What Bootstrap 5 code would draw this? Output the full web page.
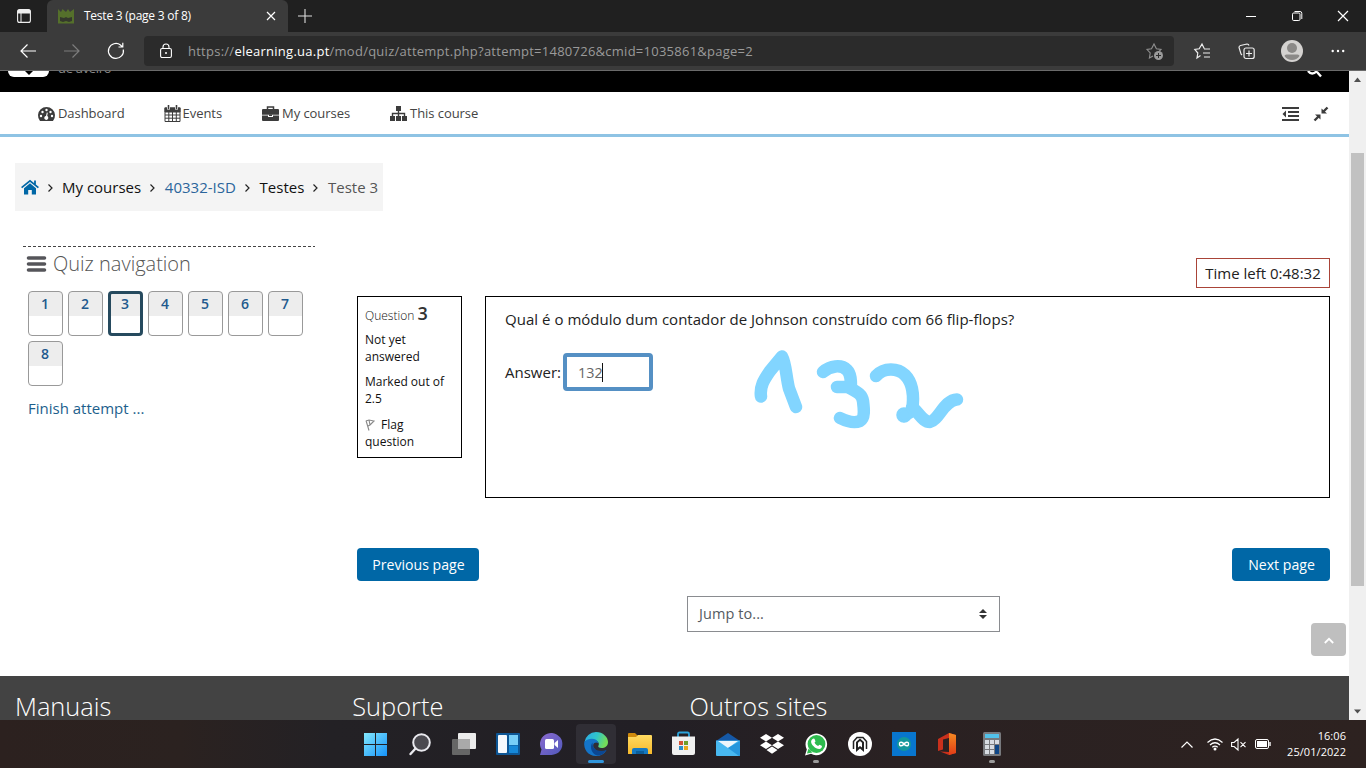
<!DOCTYPE html>
<html lang="en">
<head>
<meta charset="utf-8">
<title>Teste 3 (page 3 of 8)</title>
<link href="https://cdn.jsdelivr.net/npm/bootstrap@5.3.0/dist/css/bootstrap.min.css" rel="stylesheet">
<script src="https://cdn.jsdelivr.net/npm/bootstrap@5.3.0/dist/js/bootstrap.bundle.min.js"></script>
<style>
body{font-family:"Open Sans","Noto Sans",sans-serif;height:768px;width:1366px;overflow:hidden;font-size:14px;color:#222;background:#fff}
svg{display:block;flex:none;overflow:visible}
.tabstrip{height:32px;background:#202020}
.tab-active{width:241px;height:32px;margin-left:16px;background:#3b3b3b;border-radius:6px 6px 0 0;color:#fff;font-size:12px;letter-spacing:-.24px}
.toolbar{height:39px;background:#3b3b3b;border-bottom:1px solid #6a6a6a}
.address{width:1030px;height:30px;margin-left:19px;background:#2b2b2b;border-radius:4px;color:#9a9a9a;font-size:13px;letter-spacing:.255px}
.address b{font-weight:400;color:#fff}
.viewport{height:649px}
.site{width:1349px;overflow:hidden}
.site-head{height:21px;background:#000;overflow:hidden}
.logo-box{width:41px;height:6px;margin-left:8px;background:#fff;border-radius:0 0 6px 6px}
.logo-sub{color:#888;font-size:13px;line-height:20px;height:20px;margin:-13px 0 0 9px;letter-spacing:-.3px}
.mainnav{height:45px;border-bottom:3px solid #8ec3e4;font-size:13px;color:#444;padding:1px 0 0 38px}
.mainnav span{letter-spacing:-.06px}
.crumbs{margin:26px 0 0 15px;width:368px;height:48px;background:#f4f4f4;padding-left:6px;padding-top:1px;font-size:15px;color:#111}
.sep{margin:0 9.700px 0 9px}
.body-area{height:465px}
.side{width:342px;padding:35px 0 0 23px}
.dash{width:292px;height:1px;background:repeating-linear-gradient(90deg,#444 0 3px,transparent 3px 5px)}
.side h2{font-size:20px;font-weight:300;color:#555;line-height:28px;letter-spacing:0}
.tiles{padding-left:5px;gap:5px;width:292px;margin-top:14px}
.tile{width:35px;height:45px;border:1px solid #999;border-radius:4px;background:linear-gradient(#ededed 24px,#fff 24px);text-align:center;font-weight:600;font-size:14px;line-height:24px;color:#1f5a8e;text-decoration:none;padding-right:1px}
.tile.current{border:3px solid #264a5e;line-height:20px;background:linear-gradient(#ededed 22px,#fff 22px)}
.finish{padding-left:5px;margin-top:11px;color:#1d5f8d;font-size:15px}
.quiz{width:973px;padding-top:47px;margin-left:15px}
.timer{width:134px;height:30px;border:1px solid #a94438;font-size:15px;line-height:29px;text-align:center}
.qinfo{width:105px;height:162px;border:1px solid #000;padding:7px 7px 0;font-size:12px;line-height:17px;color:#111}
.qbox{width:845px;height:202px;margin-left:23px;border:1px solid #000;font-size:15px}
.qtext{padding:12px 0 0 19px;line-height:21px;letter-spacing:.03px}
.answer{width:90px;height:38px;border:4px solid #5590c4;border-radius:4px;color:#666;padding-left:11px;line-height:31px;font-size:14.4px;margin-left:2px;background:#fff}
.caret{width:1px;height:19px;background:#111;margin-left:-1px}
.ink{left:0;top:0}
.btn-moodle{--bs-btn-bg:#0067a6;--bs-btn-color:#fff;--bs-btn-hover-bg:#005488;--bs-btn-hover-color:#fff;height:33px;border:0;border-radius:4px;padding:0 0 0 1px;font-size:14.1px;font-weight:500}
.jump{width:313px;height:36px;border:1px solid #8a8c90;margin:15px 0 0 330px;padding:0 12px 0 11px;color:#555b62;font-size:14.5px;letter-spacing:.08px}
.to-top{right:3px;bottom:64px;width:35px;height:33px;background:#bfbfbf;border-radius:4px}
.site-foot{height:44px;background:#434343;color:#fff;font-size:25.400px;font-weight:300;line-height:34px;overflow:hidden;padding-top:13px}
.foot-col{padding-left:15px;width:337.25px}
.scrollbar-y{width:17px;background:#f0f0f0}
.thumb{width:13px;height:433px;background:#c1c1c1;margin-left:2px;margin-top:66px}
.taskbar{height:48px;background:linear-gradient(90deg,#2c211f 0,#2b2220 180px,#232125 330px,#221f25 650px,#2a2122 900px,#2d2220 1366px);color:#fff}
.app{width:44px;height:48px}
.app-open{width:40px;height:40px;border-radius:4px;background:#302e35}
.clock{font-size:11px;line-height:16px;letter-spacing:.05px;text-align:right}
</style>
</head>
<body class="d-flex flex-column">

<header class="tabstrip d-flex align-items-center flex-shrink-0">
  <svg width="14" height="14" viewBox="0 0 14 14" style="margin-left:17px"><rect x=".6" y=".6" width="12.8" height="12.8" rx="2" fill="none" stroke="#eee" stroke-width="1.1"/><path d="M.5 4.500V2.500a2 2 0 0 1 2-2h9a2 2 0 0 1 2 2v2z" fill="#eee"/><path d="M4 4v9.500" stroke="#eee"/></svg>
  <div class="tab-active d-flex align-items-center">
    <svg width="16" height="16" viewBox="0 0 16 16" style="margin-left:11px"><path d="M0 1l3 3 1.500-3L8 4l2-3 2 3 4-3v14.500H0z" fill="#55702b"/><path d="M2 9l4 1 2-1 2 1 4-1v4l-3 1-3-1-3 1-3-1z" fill="#34382c"/></svg>
    <span style="margin-left:10px">Teste 3 (page 3 of 8)</span>
    <svg class="ms-auto" width="8" height="8" style="margin-right:13px"><path d="M0 0l8 8M8 0L0 8" stroke="#fff" stroke-width="1.200"/></svg>
  </div>
  <svg width="14" height="14" style="margin-left:10px"><path d="M7 0v14M0 7h14" stroke="#ddd" stroke-width="1.100"/></svg>
  <div class="ms-auto d-flex align-items-center">
    <svg width="10" height="10"><path d="M0 5.500h10" stroke="#fff"/></svg>
    <svg width="10" height="10" style="margin-left:36px"><rect x=".5" y="2" width="7.500" height="7.500" rx="1.200" fill="none" stroke="#fff"/><path d="M2.500.5H8a1.800 1.800 0 0 1 1.800 1.800V8" fill="none" stroke="#fff"/></svg>
    <svg width="10" height="10" style="margin:0 18px 0 36px"><path d="M0 0l10 10M10 0L0 10" stroke="#fff" stroke-width="1.200"/></svg>
  </div>
</header>

<div class="toolbar d-flex align-items-center flex-shrink-0">
  <svg width="16" height="14" style="margin-left:20px"><path d="M16 7H1M7.500.5L1 7l6.500 6.500" fill="none" stroke="#fff" stroke-width="1.200"/></svg>
  <svg width="16" height="14" style="margin-left:28px"><path d="M0 7h15M8.500.5L15 7l-6.500 6.500" fill="none" stroke="#7d7d7d" stroke-width="1.200"/></svg>
  <svg width="18" height="18" style="margin-left:27px"><path d="M16.300 7.500A7.500 7.500 0 1 1 13.500 3l2 2M15.800.8V5h-4.300" fill="none" stroke="#fff" stroke-width="1.200"/></svg>
  <div class="address d-flex align-items-center">
    <svg width="12" height="16" style="margin-left:16px"><rect x=".6" y="5.500" width="10.800" height="9" rx="1.500" fill="none" stroke="#fff" stroke-width="1.100"/><path d="M3 5.500V4a3 3 0 0 1 6 0v1.500" fill="none" stroke="#fff" stroke-width="1.100"/><circle cx="6" cy="10" r="1" fill="#fff"/></svg>
    <span style="margin:1px 0 0 16px">https://<b>elearning.ua.pt</b>/mod/quiz/attempt.php?attempt=1480726&amp;cmid=1035861&amp;page=2</span>
    <svg class="ms-auto" width="18" height="17" style="margin-right:10px"><path d="M7 13l-3.600 2 .8-5L1 6.500l4.500-.7L8 1l2.400 4.800 4.600.7-2 2" fill="none" stroke="#909090" stroke-width="1.100"/><circle cx="12.500" cy="12.500" r="4.500" fill="#9a9a9a"/><path d="M12.500 10v5M10 12.500h5" stroke="#2b2b2b"/></svg>
  </div>
  <svg width="17" height="16" style="margin-left:20px"><path d="M6.500 12.500L3 15l.8-5L.8 6.500l4.400-.7L8 1l2.200 4.500M10 6h6M9 10h7M10 14h6" fill="none" stroke="#eee" stroke-width="1.200"/></svg>
  <svg width="17" height="17" style="margin-left:27px"><rect x="6" y="5" width="10.200" height="10.500" rx="2" fill="none" stroke="#eee" stroke-width="1.200"/><path d="M11 7.500v6M8 10.500h6M4 12L3 11 1 4.500a2 2 0 0 1 1.500-2L9 1a2 2 0 0 1 2 1.500" fill="none" stroke="#eee" stroke-width="1.200"/></svg>
  <svg width="22" height="22" style="margin-left:26px"><circle cx="11" cy="11" r="11" fill="#d4d2d0"/><circle cx="11" cy="8" r="5" fill="#8b8987"/><path d="M3.500 16q0-1.500 2-1.500h11q2 0 2 1.500a9 9 0 0 1-15 0z" fill="#8b8987"/></svg>
  <svg width="14" height="4" style="margin-left:28px"><g fill="#fff"><circle cx="1.700" cy="2" r="1.200"/><circle cx="7" cy="2" r="1.200"/><circle cx="12.200" cy="2" r="1.200"/></g></svg>
</div>

<div class="viewport d-flex flex-shrink-0">
<div class="site position-relative">
  <div class="site-head d-flex">
    <div class="logo-box"><svg width="41" height="6"><path d="M17 0h8l-4 4z" fill="#000"/></svg></div>
    <div class="logo-sub">de aveiro</div>
    <svg class="ms-auto" width="16" height="7" style="margin-right:26px"><path d="M1 0q4 5 9 0M10 1l4 4.500" fill="none" stroke="#fff" stroke-width="2.400"/></svg>
  </div>
  <nav class="mainnav d-flex align-items-center">
    <svg width="17" height="14" viewBox="0 0 17 14"><path d="M2 14a8.500 8.500 0 1 1 13 0z" fill="#3c3c3c"/><g fill="#fff"><circle cx="3" cy="9" r="1.200"/><circle cx="4.500" cy="5" r="1.200"/><circle cx="8.500" cy="3" r="1.200"/><circle cx="12.500" cy="5" r="1.200"/><circle cx="14" cy="9" r="1.200"/><path d="M8.800 5.500l1 .2-.6 3.400a2 2 0 1 1-1.200-.2z"/></g></svg>
    <span style="margin-left:3px">Dashboard</span>
    <svg width="17" height="17" viewBox="0 0 17 17" style="margin-left:39px"><path d="M1 3h15v13.500H1zM1 7h15M1 10h15M1 13.200h15M4.800 7v9.500M8.500 7v9.500M12.300 7v9.500" fill="none" stroke="#3c3c3c"/><path d="M.5 2.500h16V7H.5z" fill="#3c3c3c"/><path d="M4.500.5v4M12.500.5v4" stroke="#fff" stroke-width="3"/><path d="M4.500 0v4M12.500 0v4" stroke="#3c3c3c" stroke-width="1.600"/></svg>
    <span style="margin-left:2px">Events</span>
    <svg width="17" height="15" viewBox="0 0 17 15" style="margin-left:40px"><path d="M5.500 3V1h6v2" fill="none" stroke="#3c3c3c" stroke-width="1.500"/><path d="M1 3h15q1 0 1 1v4.700H0V4q0-1 1-1zM0 9.500h6V11h5V9.500h6V14q0 1-1 1H1q-1 0-1-1z" fill="#3c3c3c"/><path d="M7 8.500h3v1.500H7z" fill="#3c3c3c"/></svg>
    <span style="margin-left:3px">My courses</span>
    <svg width="17" height="15" viewBox="0 0 17 15" style="margin-left:40px"><path d="M6 0h5v5H6zM0 10h5v5H0zM6 10h5v5H6zM12 10h5v5h-5z" fill="#3c3c3c"/><path d="M8.500 5v5M2.500 10V7.500h12V10" fill="none" stroke="#3c3c3c" stroke-width="1.400"/></svg>
    <span style="margin-left:3px">This course</span>
    <svg class="ms-auto" width="17" height="14"><path d="M0 1h17M6 5h11M6 9h11M0 13h17" stroke="#3c3c3c" stroke-width="2.200"/><path d="M4 3.500v7L.5 7z" fill="#3c3c3c"/></svg>
    <svg width="14" height="14" style="margin:0 21px 0 15px"><path d="M7.500 1.500V6.500h5.500zM6.500 12.500V7.500H1z" fill="#3c3c3c"/><path d="M13.500.5L9 5M5 9L.5 13.500" stroke="#3c3c3c" stroke-width="2.400"/></svg>
  </nav>

  <div class="crumbs d-flex align-items-center">
    <svg width="18" height="15" viewBox="0 0 18 15"><path d="M9 3.200l6 5v6.300h-4.200V10H7.200v4.500H3V8.200z" fill="#0067a6"/><path d="M.6 7.600L9 .9l8.400 6.700M14 .5v4.500" fill="none" stroke="#0067a6" stroke-width="1.800"/></svg>
    <svg width="5" height="8" style="margin:0 9px"><path d="M.5.5L4 4 .5 7.500" fill="none" stroke="#222" stroke-width="1.200"/></svg>
    <span>My courses</span>
    <svg class="sep" width="5" height="8"><path d="M.5.5L4 4 .5 7.500" fill="none" stroke="#222" stroke-width="1.200"/></svg>
    <span style="color:#2b659b">40332-ISD</span>
    <svg class="sep" width="5" height="8"><path d="M.5.5L4 4 .5 7.500" fill="none" stroke="#222" stroke-width="1.200"/></svg>
    <span>Testes</span>
    <svg class="sep" width="5" height="8"><path d="M.5.5L4 4 .5 7.500" fill="none" stroke="#222" stroke-width="1.200"/></svg>
    <span style="color:#555">Teste 3</span>
  </div>

  <main class="body-area d-flex">
    <aside class="side flex-shrink-0">
      <div class="dash"></div>
      <div class="d-flex align-items-center" style="padding:2px 0 0 4px;height:28px;margin-top:2px">
        <svg width="19" height="16"><path d="M1.500 2h16M1.500 8h16M1.500 14h16" stroke="#55555a" stroke-width="3.600" stroke-linecap="round"/></svg>
        <h2 class="mb-0" style="margin-left:7px">Quiz navigation</h2>
      </div>
      <div class="tiles d-flex flex-wrap">
        <a class="tile">1</a><a class="tile">2</a><a class="tile current">3</a><a class="tile">4</a><a class="tile">5</a><a class="tile">6</a><a class="tile">7</a><a class="tile">8</a>
      </div>
      <div class="finish">Finish attempt ...</div>
    </aside>

    <section class="quiz flex-shrink-0">
      <div class="timer ms-auto">Time left 0:48:32</div>
      <div class="d-flex align-items-start" style="margin-top:8px">
        <div class="qinfo">
          <div style="height:27px;line-height:19px;font-weight:300">Question <span style="font-size:18px;font-weight:600;color:#333">3</span></div>
          <div>Not yet<br>answered</div>
          <div style="margin-top:8px;white-space:nowrap">Marked out of<br>2.5</div>
          <div class="d-flex align-items-center" style="margin-top:9px"><svg width="10" height="12" style="margin-right:6px"><path d="M1 1.500l3 10M1 2l3-1 5 1-4 4-2 1M4 1l1 5" fill="none" stroke="#888" stroke-width="1.100"/></svg>Flag</div>
          <div>question</div>
        </div>
        <div class="qbox position-relative">
          <div class="qtext">Qual é o módulo dum contador de Johnson construído com 66 flip-flops?</div>
          <div class="d-flex align-items-center" style="padding:0 0 0 19px;margin-top:23px"><span>Answer:</span>
            <div class="answer d-flex align-items-center"><span>132</span><div class="caret"></div></div>
          </div>
          <svg class="ink position-absolute" width="843" height="200" viewBox="486 297 843 200"><g fill="none" stroke="#82d5ff" stroke-width="12.500" stroke-linecap="round" stroke-linejoin="round"><path d="M761 396.500c-1.500-11 4-18 9-25.500l12-14.500c4 7 4 20 7 32l7 18.500"/><path d="M823 372c7-6 18-8 24-2 4 4 4 11 4 17h-14M848 387c9 5 14 7 15 14 1 8 2 17-3 20-7 3-14 0-20-3"/><path d="M876 376c8-9 22-8 29-1 9 9 9 23 7 36l-8 5M912 407c8 7 11 15 18 15 9-2 14-22 27-22.500"/><circle cx="904" cy="415" r="1.500"/></g></svg>
        </div>
      </div>
      <div class="d-flex justify-content-between" style="margin-top:50px">
        <button class="btn btn-moodle" style="width:122px">Previous page</button>
        <button class="btn btn-moodle" style="width:98px">Next page</button>
      </div>
      <div class="jump d-flex align-items-center justify-content-between"><span>Jump to...</span>
        <svg width="8" height="10"><path d="M0 4l4-4 4 4zM0 6l4 4 4-4z" fill="#333"/></svg>
      </div>
    </section>
  </main>
  <div class="position-absolute to-top d-flex align-items-center justify-content-center"><svg width="10" height="7" style="margin-top:2px"><path d="M.8 6L5 1.800 9.200 6" fill="none" stroke="#fff" stroke-width="1.800"/></svg></div>
  <footer class="site-foot d-flex">
    <div class="foot-col">Manuais</div><div class="foot-col">Suporte</div><div class="foot-col">Outros sites</div>
  </footer>
</div>
<div class="scrollbar-y d-flex flex-column">
  <svg width="17" height="16"><path d="M5 11l3.500-4.500L12 11z" fill="#505050"/></svg>
  <div class="thumb"></div>
  <svg class="mt-auto" width="17" height="17"><path d="M5 6.500l3.500 4 3.500-4z" fill="#505050"/></svg>
</div>
</div>

<footer class="taskbar d-flex align-items-center flex-shrink-0">
  <svg width="0" height="0" class="position-absolute"><defs>
    <linearGradient id="gw" x2="1" y2="1"><stop stop-color="#83e8fd"/><stop offset="1" stop-color="#1593fa"/></linearGradient>
    <linearGradient id="ge" x2="1" y2=".3"><stop stop-color="#2ba8ea"/><stop offset=".55" stop-color="#30c5c9"/><stop offset="1" stop-color="#73dc5a"/></linearGradient>
    <linearGradient id="gv" x2="1" y2="1"><stop stop-color="#8b6ad0"/><stop offset="1" stop-color="#5059bb"/></linearGradient>
    <linearGradient id="gf" x2="0" y2="1"><stop stop-color="#ffdb62"/><stop offset="1" stop-color="#f7b92c"/></linearGradient>
    <linearGradient id="go" x2="0" y2="1"><stop stop-color="#f58b22"/><stop offset="1" stop-color="#e23b16"/></linearGradient>
  </defs></svg>
  <div class="d-flex" style="margin-left:353.500px">
    <div class="app d-flex align-items-center justify-content-center"><svg width="23" height="23"><path d="M0 0h11v11H0zM12 0h11v11H12zM0 12h11v11H0zM12 12h11v11H12z" fill="url(#gw)"/></svg></div>
    <div class="app d-flex align-items-center justify-content-center"><svg width="22" height="23"><circle cx="12.500" cy="9.500" r="8.300" fill="#4b4a50" stroke="#e9e9ee" stroke-width="2"/><path d="M6.500 15.500L1.500 21" stroke="#e9e9ee" stroke-width="2.400" stroke-linecap="round"/></svg></div>
    <div class="app d-flex align-items-center justify-content-center"><svg width="24" height="22"><rect x="6" width="18" height="16" rx="1" fill="#ececec"/><rect y="6" width="18" height="16" rx="1" fill="#666"/><path d="M6 6h12v10H6z" fill="#a9a9a9"/></svg></div>
    <div class="app d-flex align-items-center justify-content-center"><svg width="24" height="22"><rect width="24" height="22" rx="1" fill="#0d5695"/><rect x="2" y="2" width="9" height="18" rx="1" fill="#f5f9fd"/><rect x="13" y="2" width="9" height="10" fill="#77cef8"/><rect x="13" y="12.500" width="9" height="7.500" fill="#1688d8"/></svg></div>
    <div class="app d-flex align-items-center justify-content-center"><svg width="23" height="22"><path d="M0 22l1.500-5.500A11.200 11 0 1 1 11.500 22z" fill="url(#gv)"/><rect x="5" y="6" width="9" height="10" rx="1.500" fill="#fff"/><path d="M14.500 10l3.500-3v8l-3.500-3z" fill="#fff"/></svg></div>
    <div class="app d-flex align-items-center justify-content-center position-relative"><div class="app-open d-flex align-items-center justify-content-center"><svg width="24" height="24"><path d="M.5 10A12 11.500 0 0 1 12 0c7 0 12 5 12 10 0 4-3 6-6.500 6-2.500 0-4-1-3-2.500C17 9 8 5 .5 10z" fill="url(#ge)"/><path d="M.3 10C5 5 13 6 14.500 11 10 9 8 13 10 16c2 4 8 5 12.500 2A12 12 0 0 1 12 24C4 24-.7 17 .3 10z" fill="#1474c8"/><path d="M8.500 10.500C5 15 8 23 14 23.500c4 0 7-3 8.500-5.500C18 20 12 19 10 16c-1.500-2-1.500-4-1.500-5.500z" fill="#0b4793"/></svg></div><svg class="position-absolute" width="16" height="3" style="left:14px;bottom:5px"><rect width="16" height="3" rx="1.500" fill="#3196dc"/></svg></div>
    <div class="app d-flex align-items-center justify-content-center"><svg width="24" height="22"><path d="M0 1q0-1 1-1h6l3 3v4H0z" fill="#cf8a0d"/><path d="M0 4h8l2-2h13q1 0 1 1v18H0z" fill="url(#gf)"/><path d="M4 21v-4q0-2 2-2h12q2 0 2 2v4z" fill="#1579c2"/><path d="M8 18h8v3H8z" fill="#0b5e9b"/></svg></div>
    <div class="app d-flex align-items-center justify-content-center"><svg width="23" height="24"><path d="M6 5V2q0-1.500 1.500-1.500h8Q17 .5 17 2v3" fill="none" stroke="#2ba4dc" stroke-width="1.800"/><path d="M0 4.500h23V21q0 2-2 2H2q-2 0-2-2z" fill="#f0f0f0"/><path d="M7 9h4v4H7z" fill="#d45235"/><path d="M12 9h4v4h-4z" fill="#6e9e29"/><path d="M7 14h4v4H7z" fill="#2c8ec8"/><path d="M12 14h4v4h-4z" fill="#e9a91d"/></svg></div>
    <div class="app d-flex align-items-center justify-content-center"><svg width="24" height="23"><path d="M0 8l12-8 12 8z" fill="#1558a6"/><path d="M0 7.500h24V22q0 1-1 1H1q-1 0-1-1z" fill="#48b8f0"/><path d="M2 8h20L12 15z" fill="#eef6fb"/><path d="M24 8v14q0 1-1 1L12 15z" fill="#2696dc"/></svg></div>
    <div class="app d-flex align-items-center justify-content-center"><svg width="24" height="20"><path d="M6 0l6 3.700-6 3.700-6-3.700zM18 0l6 3.700-6 3.700-6-3.700zM6 7.600l6 3.700-6 3.700-6-3.700zM18 7.600l6 3.700-6 3.700-6-3.700zM12 12.500l5.500 3.500-5.500 3.700L6.500 16z" fill="#fff"/></svg></div>
    <div class="app d-flex align-items-center justify-content-center position-relative"><svg width="22" height="23"><path d="M0 22.500l1.800-6A10.800 10.800 0 1 1 6 20.800z" fill="#fff"/><circle cx="11.500" cy="11" r="8.900" fill="#2dbb4e"/><path d="M2 20.500l1.500-5 4 4z" fill="#2dbb4e"/><path d="M7.500 6q1.800-1 2.300.5l.7 2-1 1.300q1.300 2.300 3.600 3.200l1.300-1.300 2.300 1.100c.8.600-.2 3-2.200 3.200-4 .2-8.600-4.500-8.400-7.500q0-1.500 1.400-2.500z" fill="#fff"/></svg><svg class="position-absolute" width="6" height="3" style="left:19px;bottom:5px"><rect width="6" height="3" rx="1.500" fill="#9b9b9b"/></svg></div>
    <div class="app d-flex align-items-center justify-content-center"><svg width="24" height="24"><circle cx="12" cy="12" r="12" fill="#fff"/><path d="M5.500 17V9.500L9 5.500h6l3.500 4V17" fill="none" stroke="#222" stroke-width="1.500"/><path d="M8 20V10l4-3.500 4 3.500v10l-4-3.500z" fill="#222"/><path d="M10 15.500v-4.700l2-1.800 2 1.800v4.700L12 14z" fill="#fff"/></svg></div>
    <div class="app d-flex align-items-center justify-content-center"><svg width="24" height="24"><rect width="24" height="24" fill="#0876ce"/><circle cx="12" cy="12" r="7" fill="#12979c"/><path d="M12 12c-1.500-2-4.500-2.800-4.500 0s3 2 4.500 0 4.500-2.800 4.500 0-3 2-4.500 0z" fill="none" stroke="#fff" stroke-width="1.400"/></svg></div>
    <div class="app d-flex align-items-center justify-content-center"><svg width="19" height="22"><path d="M0 6l11-6 7 2v18l-7 2-9-3.500 9 .5V5L5 6.500v10L0 18z" fill="#c9301c"/><path d="M11 0l7 2v18l-7 2z" fill="url(#go)"/></svg></div>
    <div class="app d-flex align-items-center justify-content-center position-relative"><svg width="18" height="24"><rect width="18" height="24" rx="1.500" fill="#77797d"/><path d="M2 2h14v4H2z" fill="#52c2ea"/><path d="M2 8h4v4H2zM7 8h4v4H7zM12 8h4v4h-4zM2 13h4v4H2zM7 13h4v4H7zM2 18h4v4H2zM7 18h4v4H7z" fill="#d7dce2"/><path d="M12 13h4v9h-4z" fill="#0e4687"/></svg><svg class="position-absolute" width="6" height="3" style="left:19px;bottom:5px"><rect width="6" height="3" rx="1.500" fill="#9b9b9b"/></svg></div>
  </div>
  <div class="ms-auto d-flex align-items-center" style="padding-right:20px">
    <svg width="12" height="7"><path d="M.5 6.500L6 1l5.500 5.500" fill="none" stroke="#fff" stroke-width="1.200"/></svg>
    <svg width="16" height="13" style="margin-left:14px"><g fill="none" stroke="#fff" stroke-width="1.200"><path d="M.5 4.500q7.500-7 15 0M3 7q5-4.500 10 0M5.300 9.300q2.700-2.300 5.400 0"/></g><circle cx="8" cy="11" r="1.500" fill="#fff"/></svg>
    <svg width="16" height="13" style="margin-left:8px"><path d="M.6 4.500h2.500L7 1v11L3.100 8.500H.6zM9.500 4.200l5 5M14.500 4.200l-5 5" fill="none" stroke="#fff" stroke-width="1.100"/></svg>
    <svg width="16" height="10" style="margin-left:8px"><rect x=".5" y=".5" width="13" height="9" rx="1.500" fill="none" stroke="#fff"/><rect x="2" y="2" width="10" height="6" fill="#fff"/><path d="M15 3v4" stroke="#fff" stroke-width="1.400"/></svg>
    <div class="clock" style="margin-left:16px">16:06<br>25/01/2022</div>
  </div>
</footer>
</body>
</html>
